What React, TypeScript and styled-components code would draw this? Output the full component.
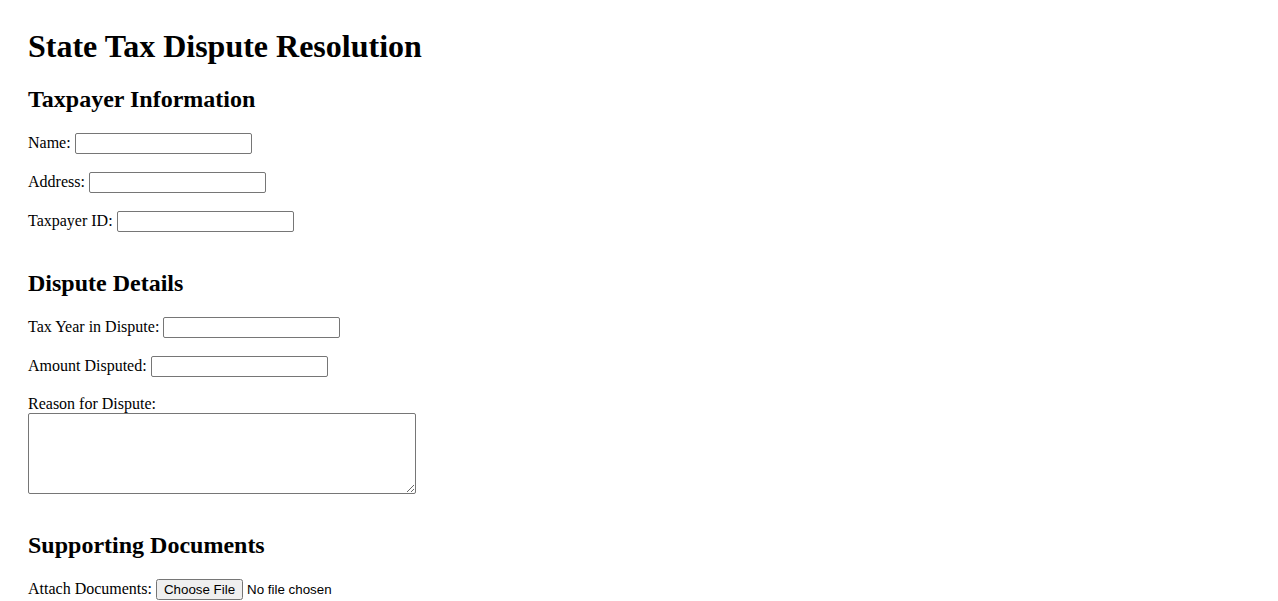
import React from 'react';
import styled, {createGlobalStyle} from "styled-components";

const GlobalStyle = createGlobalStyle`
    html, body {
        margin: 0;
        padding: 0;
        background: #ffffff;
    }

    body {
        font-family: "Liberation Serif", "Times New Roman", serif;
        font-size: 16px;
        color: #000000;
    }
`

const taxpayerFields = ["Name", "Address", "Taxpayer ID"]
const disputeFields = ["Tax Year in Dispute", "Amount Disputed"]

const App = () => {
    return (
        <>
            <GlobalStyle/>
            <Page>
                <Title>State Tax Dispute Resolution</Title>

                <Section>
                    <SectionTitle>Taxpayer Information</SectionTitle>
                    {taxpayerFields.map((item) => (
                        <Field key={item}>
                            <label>{item}:</label> <TextInput type="text"/>
                        </Field>
                    ))}
                </Section>

                <Section>
                    <SectionTitle>Dispute Details</SectionTitle>
                    {disputeFields.map((item) => (
                        <Field key={item}>
                            <label>{item}:</label> <TextInput type="text"/>
                        </Field>
                    ))}
                    <Field>
                        <label>Reason for Dispute:</label>
                        <Reason/>
                    </Field>
                </Section>

                <Section>
                    <SectionTitle>Supporting Documents</SectionTitle>
                    <Field>
                        <label>Attach Documents:</label> <FileInput type="file"/>
                    </Field>
                </Section>
            </Page>
        </>
    );
};

export default App;

const Page = styled.main`
    padding: 28px 28px 0;
`

const Title = styled.h1`
    margin: 0 0 21.44px;
    font-size: 32px;
    font-weight: 700;
`

const Section = styled.section`
    margin-bottom: 38px;
`

const SectionTitle = styled.h2`
    margin: 0 0 19.92px;
    font-size: 24px;
    font-weight: 700;
`

const Field = styled.div`
    margin: 0 0 18px;
`

const TextInput = styled.input`
    box-sizing: border-box;
    width: 177px;
    height: 21px;
    padding: 1px 2px;
    border: 1px solid #767676;
    border-radius: 2px;
    font-family: "Liberation Sans", Arial, sans-serif;
    font-size: 13.33px;
`

const Reason = styled.textarea`
    display: block;
    box-sizing: border-box;
    width: 388px;
    height: 81px;
    margin: 0;
    padding: 2px;
    border: 1px solid #767676;
    border-radius: 2px;
    font-family: "Liberation Mono", monospace;
    font-size: 13.33px;
`

const FileInput = styled.input`
    font-family: "Liberation Sans", Arial, sans-serif;
    font-size: 13.33px;
`
